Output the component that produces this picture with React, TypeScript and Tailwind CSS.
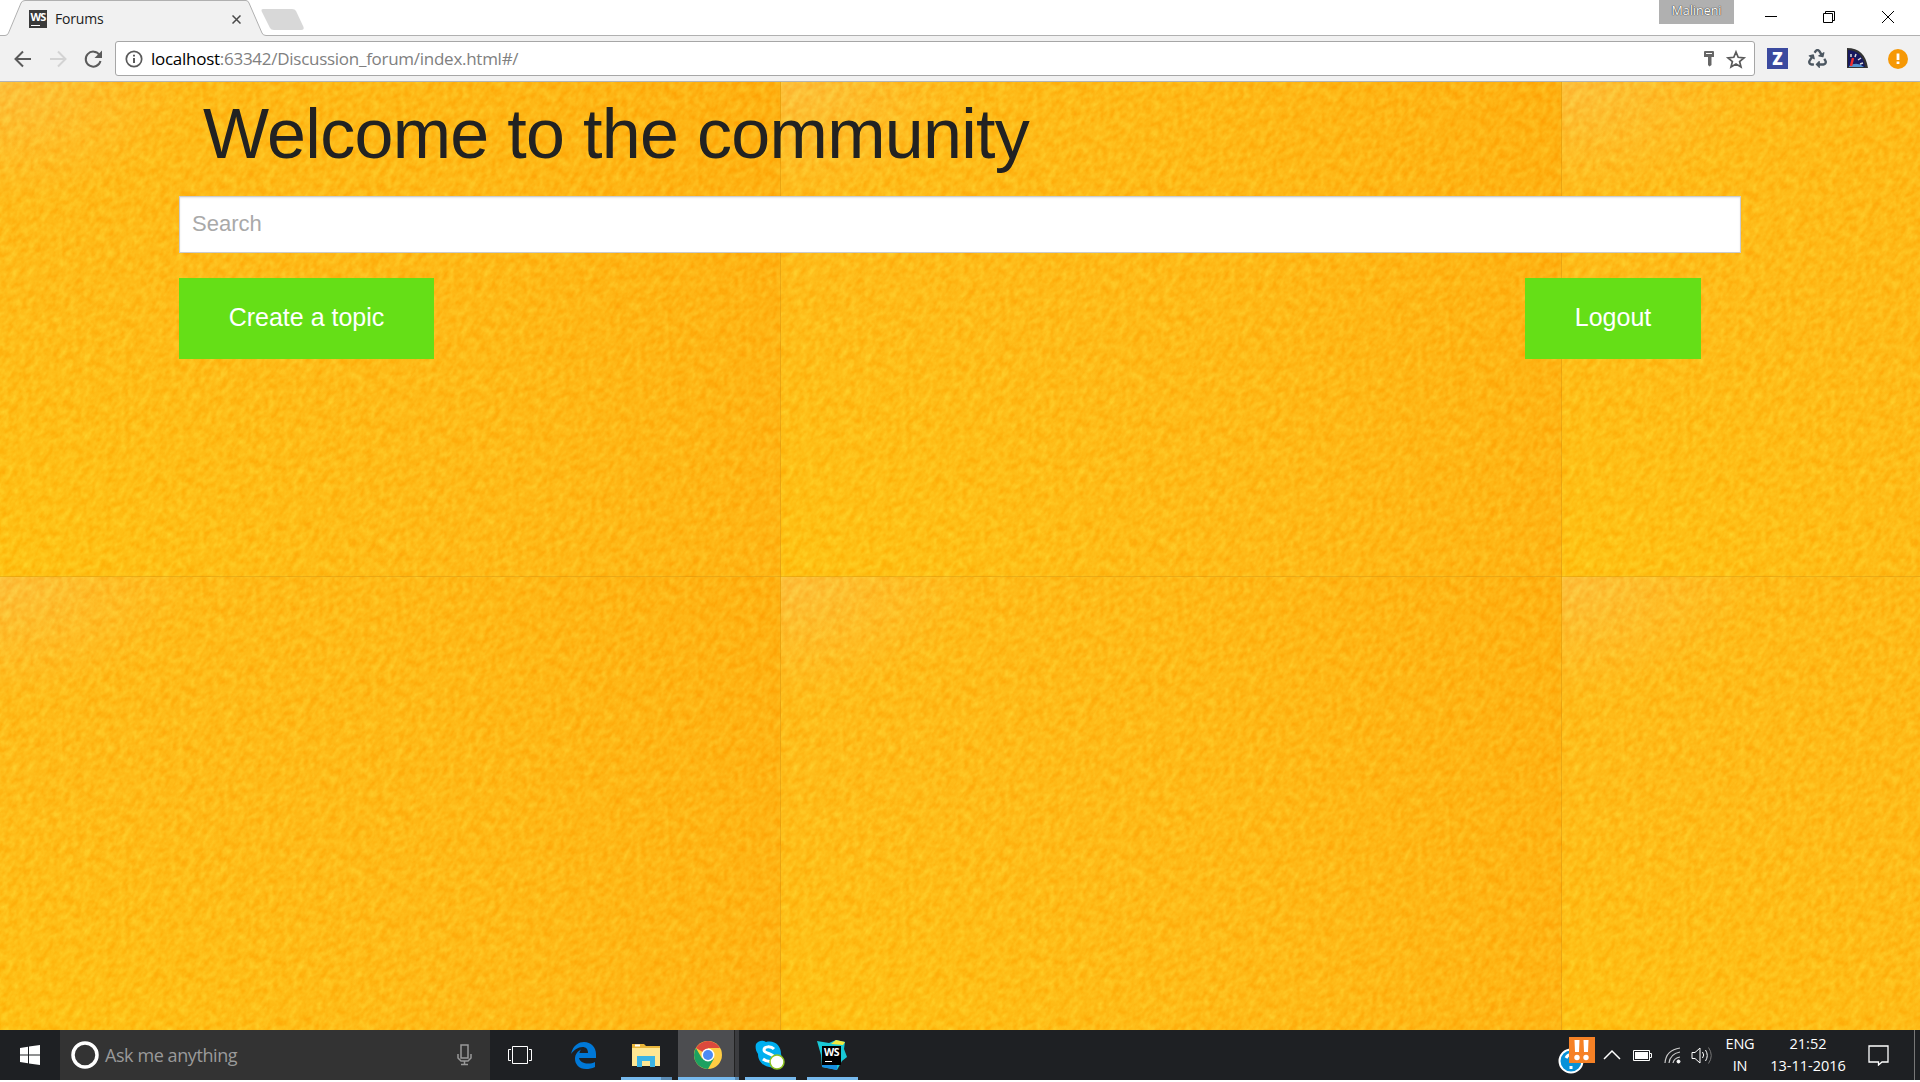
import React from "react";
import { FaRecycle } from "react-icons/fa";

const ui = "font-['Open_Sans','Noto_Sans',sans-serif]";

function Texture() {
  const tiles = [[0, 0], [781, 0], [1562, 0], [0, 495], [781, 495], [1562, 495]];
  return (
    <svg className="absolute inset-0" width="1920" height="948" aria-hidden="true">
      <defs>
        <linearGradient id="base" x1="0" y1="0.2" x2="1" y2="0">
          <stop offset="0" stopColor="#febf18" />
          <stop offset="0.5" stopColor="#febb14" />
          <stop offset="1" stopColor="#feac0b" />
        </linearGradient>
        <radialGradient id="light" cx="0" cy="0" r="0.25">
          <stop offset="0" stopColor="#fac85c" stopOpacity="0.9" />
          <stop offset="1" stopColor="#fcc450" stopOpacity="0" />
        </radialGradient>
        <radialGradient id="yellow" cx="0" cy="1" r="0.6">
          <stop offset="0" stopColor="#fecc0c" stopOpacity="0.85" />
          <stop offset="1" stopColor="#fec40c" stopOpacity="0" />
        </radialGradient>
        <filter id="grain" x="0" y="0" width="1" height="1" colorInterpolationFilters="sRGB">
          <feTurbulence type="fractalNoise" baseFrequency="0.17 0.12" numOctaves="3" seed="4" />
          <feColorMatrix values="0 0 0 0 1  0.42 0 0 0 0.51  0.42 0 0 0 -0.1  0 0 0 0 0.45" />
        </filter>
        <clipPath id="edge"><rect width="781" height="495" /></clipPath>
        <g id="tile" clipPath="url(#edge)">
          <rect width="781" height="495" fill="url(#base)" />
          <rect width="781" height="495" fill="url(#yellow)" />
          <rect width="781" height="495" fill="url(#light)" />
          <rect x="-100" y="-450" width="1200" height="1000" transform="rotate(32)" filter="url(#grain)" />
          <path d="M780.5 0V495M0 494.5H781" stroke="#c98d12" strokeOpacity="0.35" />
        </g>
      </defs>
      {tiles.map(([x, y]) => (
        <use key={x + "-" + y} href="#tile" x={x} y={y} />
      ))}
    </svg>
  );
}

function TabStrip() {
  return (
    <div className="relative flex h-[36px] shrink-0 bg-white">
      <svg className="absolute inset-0" width="1920" height="36" fill="none">
        <path d="M0 36V35.5H6L9 33L21 3Q22 .5 25 .5H246Q248 .5 249 3L262 33Q263 35.500 266 35.500V36Z" fill="#f1f1f1" />
        <path d="M0 35.500H5Q7.500 35.500 8.500 33L21 3Q22 .5 25 .5H246Q248 .5 249 3L262 33Q263 35.500 266 35.500H1920" stroke="#b0b0b0" />
        <path d="M263 9H292Q295 9 296 11L303.500 27Q304.500 30 301 30H274Q271 30 270 28L261.500 11Q261 9 263 9Z" fill="#d8d8d8" />
      </svg>
      <div className={"relative flex w-[250px] items-center pt-[2px] pl-[29px] " + ui}>
        <div className="relative flex h-[18px] w-[18px] justify-center bg-[#3a3a3a] text-[11px] leading-[13px] font-bold tracking-[-0.8px] text-white">
          WS
          <span className="absolute bottom-[2px] left-[2px] h-[1px] w-[9px] bg-white" />
        </div>
        <span className="ml-[8px] -mt-px text-[14px] tracking-[-0.2px] text-[#222]">Forums</span>
        <svg className="ml-auto mr-[9px]" width="9" height="9" stroke="#4a4a4a" strokeWidth="1.500"><path d="M.5 .5 8.500 8.500M8.500 .5 .5 8.500" /></svg>
      </div>
      <div className="relative ml-auto flex">
        <div className={"h-[24px] w-[75px] bg-[#b0b0b0] text-center text-[12.500px] leading-[22px] font-medium text-white [text-shadow:0_0_1px_#222,0_0_1px_#333] " + ui}>Malineni</div>
        <svg width="186" height="34" fill="none" stroke="#000">
          <path d="M31 16.500H43M89.500 13.500H98.500V22.500H89.500ZM91.500 13.500V11.500H100.500V20.500H98.500M148 11 160 23M160 11 148 23" />
        </svg>
      </div>
    </div>
  );
}

function Toolbar() {
  return (
    <div className="flex h-[46px] shrink-0 items-center border-b border-[#b4b4b4] bg-[#f1f1f1]">
      <svg width="115" height="44" fill="none" strokeWidth="2">
        <path d="M31 22H16M23 14.500 15.500 22 23 29.500" stroke="#5a5a5a" />
        <path d="M50 22H65M58 14.500 65.500 22 58 29.500" stroke="#d3d3d3" />
        <path d="M99.500 18A7.500 7.500 0 1 0 100.500 24" stroke="#5a5a5a" />
        <path d="M102 13.500V21H94.500Z" fill="#5a5a5a" />
      </svg>
      <div className={"flex h-[35px] w-[1640px] items-center rounded-[3px] border border-[#a6a6a6] bg-white " + ui}>
        <svg className="ml-[9px]" width="18" height="18" fill="none" stroke="#5a5a5a" strokeWidth="1.700">
          <circle cx="9" cy="9" r="7.700" /><path d="M9 8V13M9 4.800V6.600" strokeWidth="2" />
        </svg>
        <span className="ml-[8px] text-[17px] tracking-[-0.27px] text-[#808080]"><span className="text-black">localhost</span>:63342/Discussion_forum/index.html#/</span>
        <svg className="ml-auto mr-[3px]" width="60" height="30">
          <path d="M14 7H22Q23 7 23 8V13H20.500V21L18.500 22.500 17 21V13H13V8Q13 7 14 7Z" fill="#666" /><path d="M15 9.500H21" stroke="#fff" />
          <path d="M45 8 47.200 13.300 53 13.800 48.600 17.500 50 23 45 20 40 23 41.400 17.500 37 13.800 42.800 13.300Z" fill="none" stroke="#5a5a5a" strokeWidth="1.700" />
        </svg>
      </div>
      <div className="ml-[12px] flex h-[21px] w-[21px] items-center justify-center bg-[#3b4a9f] font-['Open_Sans',sans-serif] text-[17px] leading-none font-black text-white">Z</div>
      <FaRecycle className="ml-[20px]" size={19} color="#4c5761" />
      <svg className="ml-[20px]" width="21" height="21">
        <path d="M0 0Q18 0 21 20H0Z" fill="#333" /><path d="M1 2Q16 3 18 19H1Z" fill="#17195f" />
        <path d="M2 18Q10 13 17 19H2Z" fill="#5193cf" /><path d="M4 18 6 10" stroke="#f32d2d" strokeWidth="2.500" />
        <path d="M4 6V9M9 6 8 9M14 10 11 12M16 15 13 16" stroke="#ddd" strokeWidth="1.500" />
      </svg>
      <svg className="ml-[20px]" width="20" height="20"><circle cx="10" cy="10" r="10" fill="#f69805" /><path d="M10 4.500V11M10 12.500V15" stroke="#fff" strokeWidth="2.800" /></svg>
    </div>
  );
}

function Page() {
  return (
    <main className="relative h-[948px] shrink-0 overflow-hidden bg-[#feb914] font-['Liberation_Sans',Arial,sans-serif]">
      <Texture />
      <div className="relative mx-auto w-[1562px]">
        <h1 className="h-[114px] pt-[3px] pl-[24px] text-[70px] leading-[98px] tracking-[-0.7px] text-[#222]">Welcome to the community</h1>
        <input aria-label="Search" placeholder="Search" className="block h-[57px] w-full border border-[#ccc] bg-white px-[12px] pb-[2px] text-[22px] shadow-[inset_0_1px_2px_rgba(0,0,0,0.1)] placeholder:text-[#a9a9a9]" />
        <div className="mt-[25px] flex justify-between pr-[40px] text-[25px] text-white">
          <button className="h-[81px] w-[255px] bg-[#65df17] pb-[2px]">Create a topic</button>
          <button className="h-[81px] w-[176px] bg-[#65df17] pb-[2px]">Logout</button>
        </div>
      </div>
    </main>
  );
}

function AppSlot({ children, bar, className = "" }: { children: React.ReactNode; bar?: string; className?: string }) {
  return (
    <div className={"relative flex h-full items-center justify-center " + className}>
      {children}
      {bar && <span className={"absolute bottom-0 h-[3px] bg-[#76b9ed] " + bar} />}
    </div>
  );
}

function Taskbar() {
  return (
    <footer className={"flex h-[50px] shrink-0 bg-[#1e2023] text-white " + ui}>
      <div className="flex w-[60px] items-center justify-center">
        <svg width="20" height="20" fill="#fff"><path d="M0 3 8 1.800V9.500H0ZM9 1.600 20 0V9.500H9ZM0 10.500H8V18.200L0 17ZM9 10.500H20V20L9 18.400Z" /></svg>
      </div>
      <div className="flex w-[430px] items-center bg-[#333] pl-[11px]">
        <svg width="28" height="28" fill="none"><circle cx="14" cy="14" r="12" stroke="#fff" strokeWidth="3.500" /></svg>
        <span className="ml-[6px] pt-px text-[18px] tracking-[-0.42px] text-[#9a9a9a]">Ask me anything</span>
        <svg className="ml-auto mr-[18px]" width="15" height="22" fill="none" stroke="#999" strokeWidth="1.500"><path d="M4 1H11V14H4ZM1 10V14L4 17H11L14 14V10M7.500 17V20M4 20.500H11" /></svg>
      </div>
      <AppSlot className="w-[60px]"><svg width="26" height="20" fill="none" stroke="#fff"><path d="M5.500 1.500H20.500V18.500H5.500ZM4 4.500H1.500V15.500H4M22 4.500H24.500V15.500H22" /></svg></AppSlot>
      <AppSlot className="w-[70px] pr-[3px]">
        <svg width="25" height="28" fill="#0078d7"><path d="M0 13C2 4 8 1 13 1 20 1 25 6 25 13V17H8C9 21 13 22.500 17 22.500 20 22.500 22 22 24 21V26C21 27.500 18 28 15 28 8 28 4 23 4 18 4 13 7 10 10 8.500 9 10 8.500 11 8.500 12H17C17 8 15 6 11.500 6 7 6 3 9 0 13Z" /></svg>
      </AppSlot>
      <AppSlot className="w-[52px]" bar="left-[1px] w-[51px] border-r-[11px] border-[#5a8bb4]">
        <svg width="28" height="24"><path d="M0 1H12L14 3H28V23H0Z" fill="#e9b63b" /><path d="M0 5H28V23H0Z" fill="#ffe793" /><path d="M5 24V13H23V24H18V18H10V24Z" fill="#3bb4e5" /><path d="M3 2.500H8" stroke="#fff" strokeWidth="2" /></svg>
      </AppSlot>
      <AppSlot className="ml-[6px] w-[56px] bg-[#4c4d50] pl-[3px]" bar="left-0 z-10 w-[61px] border-r-[4px] border-[#5a8bb4]">
        <svg width="28" height="28" viewBox="0 0 28 28">
          <circle cx="14" cy="14" r="14" fill="#ffcd43" />
          <path d="M14 14 1.900 7A14 14 0 0 1 26.100 7H14Z" fill="#dc4a3d" />
          <path d="M1.900 7A14 14 0 0 0 14 28L20 17.500H14L8 17.500Z" fill="#1ca160" />
          <circle cx="14" cy="14" r="6.500" fill="#fff" /><circle cx="14" cy="14" r="5" fill="#4c8bf5" />
        </svg>
      </AppSlot>
      <div className="h-[50px] w-[5px] border-l border-[#222] bg-[#3b3c3f]" />
      <AppSlot className="w-[62px]" bar="left-[6px] w-[51px]">
        <svg width="30" height="30"><path d="M1 4C4 0 8 0 11 2 20 0 26 6 26 14 28 20 27 27 21 27 11 29 3 23 3 14 1 11 0 8 1 4Z" fill="#00aff0" />
          <path d="M19 9C16 6 9 6 9 10S19 13 19 18 12 22 8 19" fill="none" stroke="#fff" strokeWidth="3" /><circle cx="22" cy="22" r="7" fill="#fff" stroke="#8dc220" strokeWidth="1.500" /></svg>
      </AppSlot>
      <AppSlot className="ml-px w-[60px]" bar="left-[5px] w-[51px]">
        <div className="relative h-[30px] w-[30px]">
          <svg className="absolute inset-0" width="30" height="30"><path d="M0 1 12 3 19 0 28 2 27 9 30 17 25 21 20 30 5 27 4 15Z" fill="#18c8d6" /><path d="M14 4 19 0 28 2 26 5Z" fill="#f4e93e" /><path d="M5 20 20 24V30L5 27Z" fill="#168ee0" /></svg>
          <div className="absolute top-[6px] left-[5px] h-[19px] w-[19px] bg-black text-center text-[10.500px] leading-[13px] font-bold tracking-[-0.5px]">WS<span className="absolute bottom-[3px] left-[3px] h-px w-[7px] bg-white" /></div>
        </div>
      </AppSlot>
      <div className="ml-auto flex items-center">
        <svg width="158" height="50" fill="none" stroke="#fff">
          <circle cx="13" cy="31" r="11.500" fill="#0791d8" strokeWidth="2" /><path d="M8 28Q10 24 14 25M13 36V39" strokeWidth="3" />
          <rect x="11" y="7" width="26" height="26" fill="#f68125" stroke="none" />
          <path d="M16.500 10H21.500L21 22H17ZM25.500 10H30.500L30 22H26Z" fill="#fff" stroke="none" />
          <circle cx="19" cy="27.500" r="2.700" fill="#fff" stroke="none" /><circle cx="28" cy="27.500" r="2.700" fill="#fff" stroke="none" />
          <path d="M46 29 54 21 62 29" strokeWidth="1.500" />
          <path d="M75.500 20.500H91.500V30.500H75.500ZM92 23.500H93.500V27.500H92" /><path d="M77 22H90V29H77Z" fill="#fff" stroke="none" />
          <path d="M107 33Q108 20 122 18M111 33Q112 24 122 22M115 33Q116 28 122 27" strokeWidth="1.200" stroke="#ccc" /><circle cx="120.500" cy="31.500" r="1.500" fill="#fff" />
          <path d="M134 22.500H137L142 18V33L137 28.500H134Z" /><path d="M144.500 22Q147 25 144.500 28M147.500 20Q151 25.500 147.500 31" /><path d="M150.500 17.500Q156 25.500 150.500 33.500" stroke="#777" />
        </svg>
        <div className="w-[46px] pl-[2px] text-center text-[14.500px] leading-[22px] tracking-[-0.2px]">ENG<br />IN</div>
        <div className="ml-[6px] w-[80px] text-center text-[14.500px] leading-[22px] whitespace-nowrap">21:52<br />13-11-2016</div>
        <svg className="ml-[20px]" width="22" height="22" fill="none" stroke="#fff" strokeWidth="1.300"><path d="M1 2H20V18H14L10.500 21V18H1Z" /></svg>
        <div className="ml-[24px] h-[50px] w-[6px] border-l border-[#777]" />
      </div>
    </footer>
  );
}

export default function App() {
  return (
    <div className="flex h-[1082px] w-[1920px] flex-col overflow-hidden bg-white">
      <TabStrip />
      <Toolbar />
      <Page />
      <Taskbar />
    </div>
  );
}
